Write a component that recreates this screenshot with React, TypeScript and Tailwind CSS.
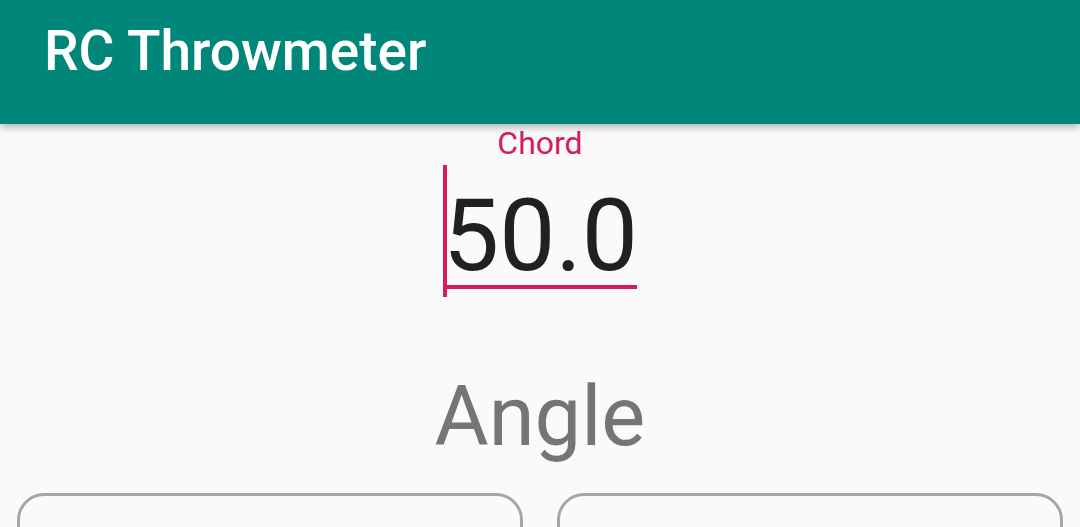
export default function App() {
  return (
    <div className="min-h-[527px] bg-[#fafafa] font-['Roboto',sans-serif]">
      <header className="relative z-10 h-[124px] bg-[#00877a] pl-[44px] pt-[24px] shadow-[0_3px_8px_rgba(0,0,0,0.3)]">
        <h1 className="text-[55px] leading-none font-medium text-white">RC Throwmeter</h1>
      </header>

      <main className="flex flex-col items-center">
        <label className="mt-[3px] text-[32px] leading-none text-[#d81b60]">Chord</label>

        <div className="mt-[6px] flex h-[132px]">
          <span className="h-full w-[4px] bg-[#d81b60]" />
          <div className="h-[124px] w-[190px] border-b-4 border-[#d81b60] pt-[21px]">
            <span className="-ml-[4px] block text-[100px] leading-none text-[#212121]">50.0</span>
          </div>
        </div>

        <h2 className="mt-[78px] text-[83px] leading-none text-[#757575]">Angle</h2>

        <div className="mt-[35px] grid w-full grid-cols-2 gap-[34px] px-[17px]">
          <div className="h-[100px] rounded-[27px] border-[3px] border-[#a6a6a6]" />
          <div className="h-[100px] rounded-[27px] border-[3px] border-[#a6a6a6]" />
        </div>
      </main>
    </div>
  );
}
